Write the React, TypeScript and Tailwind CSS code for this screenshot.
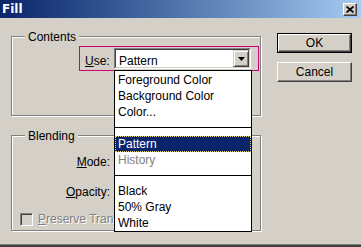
export default function App() {
  const listItem = "h-[16px] pl-[3px] leading-[16px] whitespace-nowrap";
  return (
    <div className="relative h-[247px] w-[361px] overflow-hidden bg-[#d4d0c8] font-['Liberation_Sans',Arial,sans-serif] text-[12px] leading-[16px] text-black shadow-[inset_0_-2px_0_#404040,inset_0_-3px_0_#808080]">
      {/* title bar */}
      <div className="flex h-[18px] items-center justify-between bg-linear-to-r from-[#0a246a] to-[#a6caf0] pl-[2px] pr-[4px]">
        <span className="font-['DejaVu_Sans',sans-serif] text-[12px] font-bold leading-[18px] text-white">Fill</span>
        <div className="flex h-[13px] w-[14px] items-center justify-center border border-t-white border-l-white border-r-[#404040] border-b-[#404040] bg-[#d4d0c8] shadow-[inset_-1px_-1px_0_#808080]">
          <svg width="8" height="7" viewBox="0 0 8 7">
            <path d="M0.5 0.5 L7.5 6.5 M7.5 0.5 L0.5 6.5" stroke="black" strokeWidth="1.7" />
          </svg>
        </div>
      </div>

      <div className="flex pl-[11px] pt-[15px]">
        {/* left column */}
        <div className="flex w-[250px] flex-col pt-[3px]">
          {/* Contents */}
          <div className="relative h-[80px] border border-[#808080] shadow-[inset_1px_1px_0_#fff,1px_1px_0_#fff]">
            <span className="absolute -top-[8px] left-[13px] bg-[#d4d0c8] px-[3px]">Contents</span>
            <div className="ml-[67px] mt-[9px] flex h-[25px] w-[180px] border border-[#cc0077]">
              <span className="ml-[5px] mt-[6px] w-[29px]">
                <span className="underline">U</span>se:
              </span>
              <div className="relative z-10 mt-[1px]">
                <div className="h-[21px] w-[137px] border border-t-[#808080] border-l-[#808080] border-r-white border-b-white">
                  <div className="flex h-full border border-t-[#404040] border-l-[#404040] border-r-[#d4d0c8] border-b-[#d4d0c8] bg-white">
                    <span className="flex-1 pl-[3px] pt-[3px]">Pattern</span>
                    <div className="flex h-full w-[16px] items-center justify-center border border-t-[#d4d0c8] border-l-[#d4d0c8] border-r-[#404040] border-b-[#404040] bg-[#d4d0c8] shadow-[inset_1px_1px_0_#fff,inset_-1px_-1px_0_#808080]">
                      <svg width="7" height="4" viewBox="0 0 7 4">
                        <path d="M0 0 H7 L3.5 4 Z" fill="black" />
                      </svg>
                    </div>
                  </div>
                </div>
                {/* open list */}
                <div className="absolute left-0 top-[22px] flex h-[162px] w-[138px] flex-col border border-black bg-white pt-[1px]">
                  <div className={listItem}>Foreground Color</div>
                  <div className={listItem}>Background Color</div>
                  <div className={listItem}>Color...</div>
                  <div className="flex h-[16px] items-center">
                    <div className="h-px w-full bg-black" />
                  </div>
                  <div className="h-[16px] border border-dotted border-[#e8d870] bg-[#0a246a] pl-[2px] leading-[14px] text-white">Pattern</div>
                  <div className={`${listItem} text-[#808080]`}>History</div>
                  <div className="flex h-[16px] items-center">
                    <div className="h-px w-full bg-black" />
                  </div>
                  <div className={listItem}>Black</div>
                  <div className={listItem}>50% Gray</div>
                  <div className={listItem}>White</div>
                </div>
              </div>
            </div>
          </div>

          {/* Blending */}
          <div className="relative mt-[19px] flex h-[96px] flex-col border border-[#808080] shadow-[inset_1px_1px_0_#fff,1px_1px_0_#fff]">
            <span className="absolute -top-[8px] left-[13px] bg-[#d4d0c8] px-[3px]">Blending</span>
            <div className="mt-[18px] w-[98px] text-right">
              <span className="underline">M</span>ode:
            </div>
            <div className="mt-[14px] w-[98px] text-right">
              <span className="underline">O</span>pacity:
            </div>
            <div className="mt-[11px] flex items-center pl-[8px]">
              <div className="h-[13px] w-[13px] border border-t-[#808080] border-l-[#808080] border-r-white border-b-white bg-[#d4d0c8] shadow-[inset_1px_1px_0_#404040]" />
              <span className="ml-[5px] w-[76px] overflow-hidden whitespace-nowrap text-[#808080] [text-shadow:1px_1px_0_#fff]">
                <span className="underline">P</span>reserve Transparency
              </span>
            </div>
          </div>
        </div>

        {/* buttons */}
        <div className="ml-[16px] flex flex-col">
          <div className="h-[20px] w-[75px] border border-black">
            <div className="flex h-full items-center justify-center border border-t-white border-l-white border-r-[#404040] border-b-[#404040] shadow-[inset_-1px_-1px_0_#808080]">
              OK
            </div>
          </div>
          <div className="mt-[9px] flex h-[20px] w-[75px] items-center justify-center border border-t-white border-l-white border-r-[#404040] border-b-[#404040] shadow-[inset_-1px_-1px_0_#808080]">
            Cancel
          </div>
        </div>
      </div>
    </div>
  );
}
